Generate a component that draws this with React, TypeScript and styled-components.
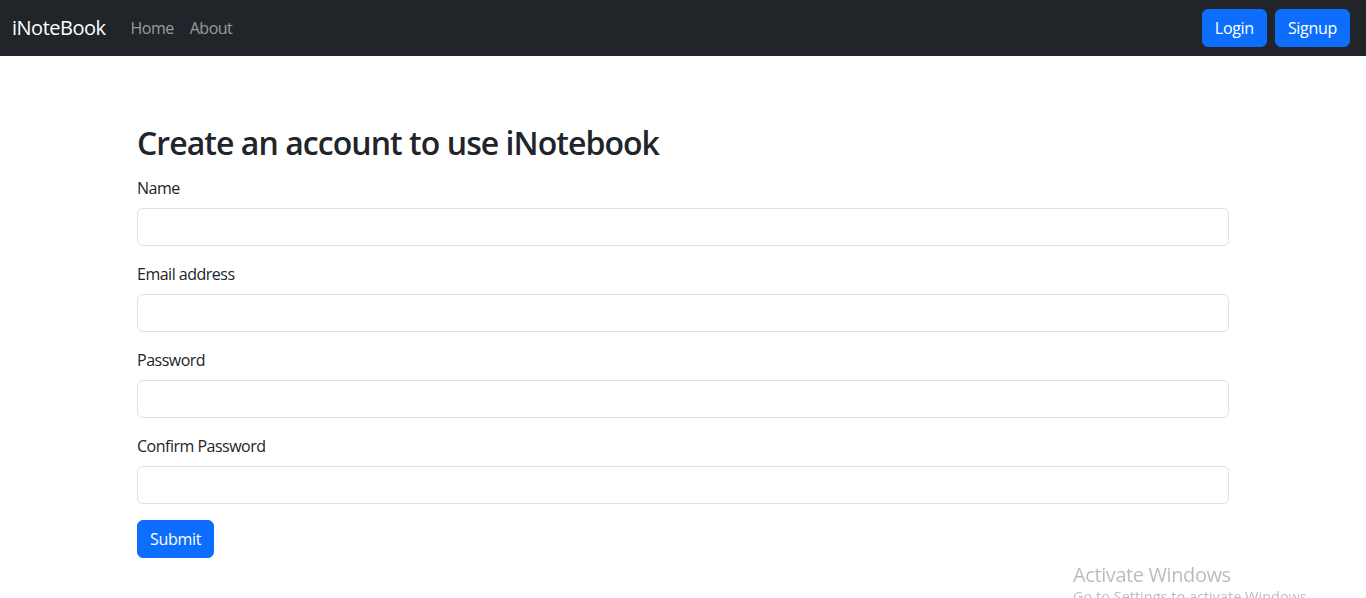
import React from "react";
import styled, { createGlobalStyle } from "styled-components";

const Global = createGlobalStyle`
  *, *::before, *::after { box-sizing: border-box; }
  body {
    margin: 0;
    font-family: "Open Sans", "Noto Sans", sans-serif;
    font-size: 16px;
    line-height: 1.5;
    color: #212529;
    background: #fff;
    overflow: hidden;
  }
`;

const Nav = styled.nav`
  background: #212529;
  height: 56px;
  display: flex;
  align-items: center;
  padding: 0 12px;
`;

const Brand = styled.a`
  color: #fff;
  font-size: 20px;
  letter-spacing: -0.5px;
  margin-right: 17px;
  text-decoration: none;
  line-height: 30px;
`;

const NavLinks = styled.div`
  display: flex;
  flex: 1;
`;

const NavLink = styled.a`
  color: rgba(255, 255, 255, 0.55);
  padding: 8px;
  text-decoration: none;
  letter-spacing: -0.5px;
`;

const NavButtons = styled.div`
  display: flex;
  gap: 8px;
  margin-right: 4px;
`;

const Button = styled.button`
  background: #0d6efd;
  border: 1px solid #0d6efd;
  color: #fff;
  font-family: inherit;
  font-size: 16px;
  letter-spacing: -0.3px;
  line-height: 24px;
  padding: 6px 12px;
  border-radius: 6px;
  cursor: pointer;
`;

const Container = styled.main`
  width: 1092px;
  margin: 0 auto;
  padding-top: 68px;
`;

const Title = styled.h2`
  margin: 0 0 14px;
  font-size: 32px;
  font-weight: 600;
  line-height: 1.2;
  letter-spacing: -0.95px;
`;

const Group = styled.div`
  margin-bottom: 16px;
`;

const Label = styled.label`
  display: block;
  margin-bottom: 8px;
  letter-spacing: -0.5px;
`;

const Input = styled.input`
  display: block;
  width: 100%;
  height: 38px;
  border: 1px solid #dee2e6;
  border-radius: 6px;
  padding: 6px 12px;
  font-family: inherit;
  font-size: 16px;
`;

const Watermark = styled.div`
  position: fixed;
  left: 1073px;
  top: 563px;
  color: rgba(0, 0, 0, 0.27);
  font-family: "Open Sans", sans-serif;
  line-height: 1.2;
  pointer-events: none;
`;

const WmTitle = styled.div`
  font-size: 20px;
  letter-spacing: -0.4px;
`;

const WmSub = styled.div`
  font-size: 14.5px;
  margin-top: 1px;
`;

const fields = [
  { id: "name", label: "Name", type: "text" },
  { id: "email", label: "Email address", type: "email" },
  { id: "password", label: "Password", type: "password" },
  { id: "cpassword", label: "Confirm Password", type: "password" },
];

export default function App() {
  return (
    <>
      <Global />
      <Nav>
        <Brand href="#">iNoteBook</Brand>
        <NavLinks>
          <NavLink href="#">Home</NavLink>
          <NavLink href="#">About</NavLink>
        </NavLinks>
        <NavButtons>
          <Button>Login</Button>
          <Button>Signup</Button>
        </NavButtons>
      </Nav>
      <Container>
        <Title>Create an account to use iNotebook</Title>
        <form onSubmit={(e) => e.preventDefault()}>
          {fields.map((f) => (
            <Group key={f.id}>
              <Label htmlFor={f.id}>{f.label}</Label>
              <Input id={f.id} type={f.type} />
            </Group>
          ))}
          <Button type="submit">Submit</Button>
        </form>
      </Container>
      <Watermark>
        <WmTitle>Activate Windows</WmTitle>
        <WmSub>Go to Settings to activate Windows.</WmSub>
      </Watermark>
    </>
  );
}
